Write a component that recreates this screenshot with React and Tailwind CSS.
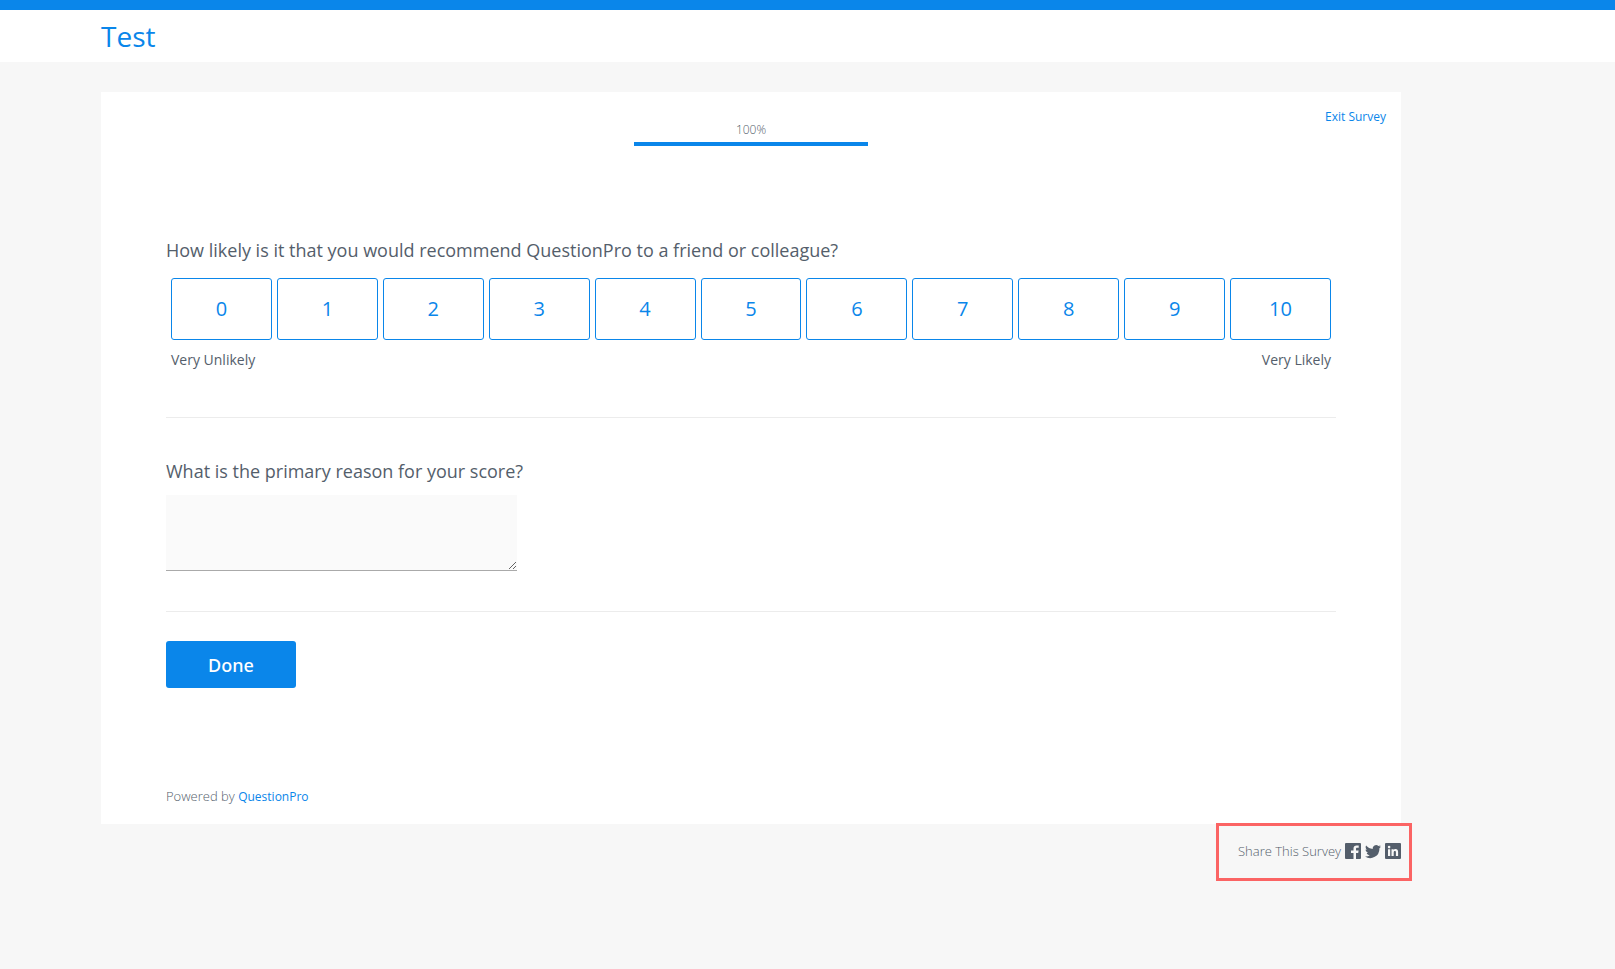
const SCORES = [0, 1, 2, 3, 4, 5, 6, 7, 8, 9, 10];

const SHARE_LINKS = [
  { label: "Facebook", Icon: FacebookIcon },
  { label: "Twitter",  Icon: TwitterIcon },
  { label: "LinkedIn", Icon: LinkedInIcon },
];

function FacebookIcon() {
  return (
    <svg viewBox="0 0 16 16" className="w-4 h-4" fill="currentColor" aria-hidden="true">
      <path d="M1 0h14a1 1 0 0 1 1 1v14a1 1 0 0 1-1 1h-4V10h2.200l.4-2.500H11V6c0-.8.300-1.200 1.200-1.200h1.500V2.500c-.3 0-1-.1-2-.1-2 0-3.200 1.100-3.200 3.200v1.900H6V10h2.500v6H1a1 1 0 0 1-1-1V1a1 1 0 0 1 1-1z" />
    </svg>
  );
}

function TwitterIcon() {
  return (
    <svg viewBox="0 0 16 16" className="w-4 h-4" fill="currentColor" aria-hidden="true">
      <path d="M16 3.500c-.6.3-1.200.4-1.900.5.7-.4 1.200-1 1.400-1.800-.6.4-1.300.6-2.100.8A3.300 3.300 0 0 0 7.800 6C5.100 5.900 2.700 4.600 1.100 2.600c-.9 1.500-.4 3.400 1 4.400-.5 0-1-.2-1.500-.4 0 1.600 1.100 2.900 2.600 3.200-.5.1-1 .2-1.500.1.400 1.300 1.600 2.200 3.100 2.300A6.700 6.700 0 0 1 0 13.500 9.300 9.300 0 0 0 14.400 5.200c.6-.5 1.200-1 1.600-1.700z" />
    </svg>
  );
}

function LinkedInIcon() {
  return (
    <svg viewBox="0 0 16 16" className="w-4 h-4" fill="currentColor" fillRule="evenodd" aria-hidden="true">
      <path d="M1 0h14a1 1 0 0 1 1 1v14a1 1 0 0 1-1 1H1a1 1 0 0 1-1-1V1a1 1 0 0 1 1-1zM3 6.200V13h2.200V6.200zM4.100 2.800a1.300 1.300 0 1 0 0 2.600 1.300 1.300 0 0 0 0-2.600zM6.500 6.200V13h2.200V9.500c0-1 .3-1.600 1.200-1.600s1 .7 1 1.700V13h2.200V9.100c0-2-.9-3.100-2.500-3.100-1 0-1.600.5-1.900 1.100v-.9z" />
    </svg>
  );
}

function ScoreScale() {
  return (
    <fieldset className="px-[5px]">
      <legend className="-ml-[5px] text-lg leading-6 mb-4">
        How likely is it that you would recommend QuestionPro to a friend or colleague?
      </legend>
      <div className="flex gap-[5px]">
        {SCORES.map(score => (
          <button
            key={score}
            type="button"
            className="flex-1 h-[62px] rounded-[3px] border border-[#0a86ea] text-[#0a86ea] text-xl"
          >
            {score}
          </button>
        ))}
      </div>
      <div className="flex justify-between mt-2 text-sm leading-6">
        <span>Very Unlikely</span>
        <span>Very Likely</span>
      </div>
    </fieldset>
  );
}

export default function App() {
  return (
    <div className="min-h-screen bg-[#f7f7f7] text-[#545e6b] font-['Open_Sans',sans-serif]">
      <header className="h-[62px] border-t-10 border-[#0a86ea] bg-white pl-[101px] flex items-center">
        <h1 className="text-[28px] leading-10 text-[#0a86ea]">Test</h1>
      </header>

      <div className="max-w-[1300px] ml-[101px] mt-[30px]">
        <main className="relative bg-white px-[5%] pt-7 pb-4">
          <a href="#exit" className="absolute top-4 right-[15px] text-xs leading-[18px] text-[#0a86ea]">Exit Survey</a>

          <div className="w-1/5 mx-auto">
            <p className="text-xs leading-5 text-center font-light mb-[2px]">100%</p>
            <div className="h-1 bg-[#0a86ea]" />
          </div>

          <form className="mt-[92px]">
            <ScoreScale />

            <div className="border-t border-[#ececec] mt-[45px] pt-[41px]">
              <label htmlFor="reason" className="block text-lg leading-6 mb-3">
                What is the primary reason for your score?
              </label>
              <textarea
                id="reason"
                className="block w-[30%] h-[76px] bg-[#fafafa] border-b border-[#aaaaaa] resize outline-none"
              />
            </div>

            <div className="border-t border-[#ececec] mt-10 pt-[29px]">
              <button type="button" className="w-[130px] h-[47px] rounded-[3px] bg-[#0a86ea] text-white text-lg font-medium font-['Noto_Sans',sans-serif]">
                Done
              </button>
            </div>
          </form>

          <p className="mt-[98px] pb-[2px] text-[13px] leading-5 font-light">
            Powered by <a href="#questionpro" className="text-xs font-normal text-[#0a86ea]">QuestionPro</a>
          </p>
        </main>

        <div className="flex justify-end -mr-[11px] -mt-px">
          <div className="relative flex items-center gap-1 w-[196px] h-[58px] justify-end pr-2 pb-[2px] border-3 border-[#fb6464]">
            <span className="text-[13px] leading-5 font-light">Share This Survey</span>
            {SHARE_LINKS.map(({ label, Icon }) => (
              <a key={label} href="#share" aria-label={label}>
                <Icon />
              </a>
            ))}
          </div>
        </div>
      </div>
    </div>
  );
}
